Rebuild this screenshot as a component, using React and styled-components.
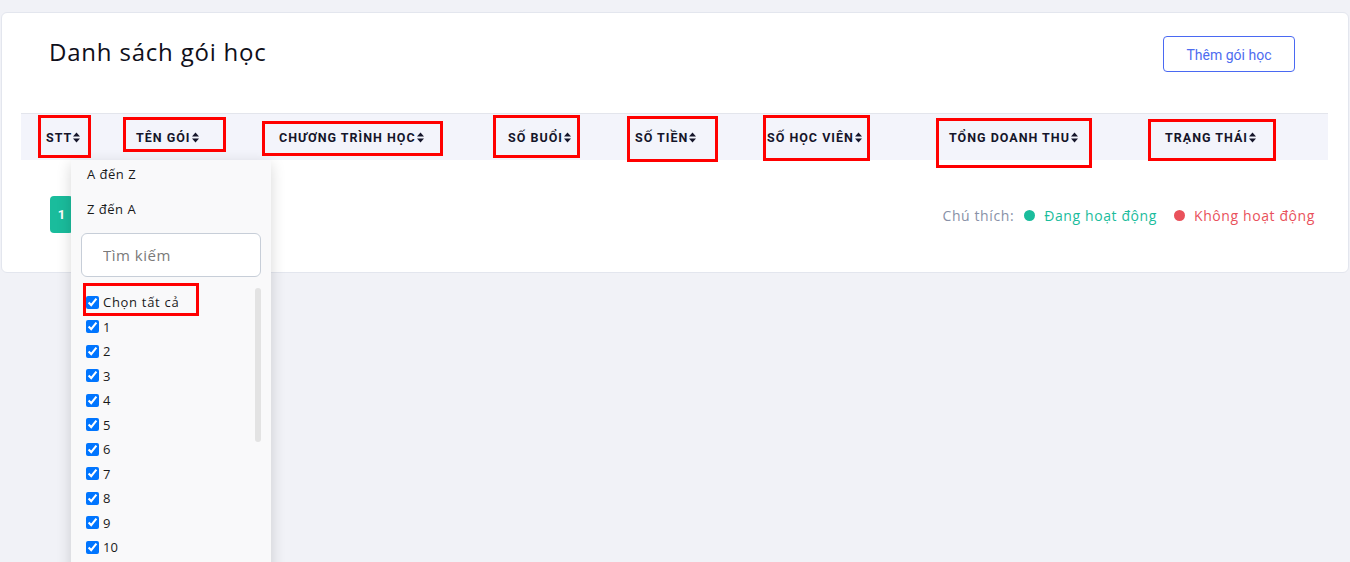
import styled, { createGlobalStyle } from "styled-components";

const GlobalStyle = createGlobalStyle`
  body {
    margin: 0;
    background: #f1f2f7;
    font-family: "Open Sans", "Noto Sans", sans-serif;
  }
`;

const Page = styled.div`
  min-height: 100vh;
  padding: 12px 1px 0 1px;
  box-sizing: border-box;
`;

const Card = styled.div`
  background: #fff;
  border: 1px solid #e3e6ee;
  border-radius: 6px;
  padding: 0 20px 0 19px;
  height: 259px;
`;

const TopBar = styled.div`
  display: flex;
  justify-content: space-between;
  align-items: flex-start;
  height: 100px;
  padding: 23px 33px 0 28px;
  box-sizing: border-box;
`;

const Title = styled.h1`
  margin: 0;
  margin-top: -1px;
  font-size: 24px;
  line-height: 34px;
  font-weight: 400;
  letter-spacing: 0.8px;
  color: #0f0f1a;
`;

const AddButton = styled.button`
  width: 132px;
  height: 36px;
  padding-top: 3px;
  border: 1px solid #4a69f2;
  border-radius: 4px;
  background: #fff;
  color: #4e6cf0;
  font-family: Roboto, sans-serif;
  font-size: 14px;
`;

const HeaderRow = styled.div`
  position: relative;
  display: grid;
  grid-template-columns: 90px 143px 229px 127px 132px 182px 216px 1fr;
  align-items: center;
  height: 46px;
  padding-left: 25px;
  background: #f3f4fb;
  border-top: 1px solid #e3e5ec;
`;

const HeadCell = styled.div`
  display: flex;
  align-items: center;
  gap: 1px;
  font-family: Roboto, sans-serif;
  font-weight: 700;
  font-size: 12.5px;
  letter-spacing: 1px;
  color: #15152a;
  text-transform: uppercase;
`;

const Mark = styled.div`
  position: absolute;
  border: 3px solid #f00;
  box-sizing: border-box;
  pointer-events: none;
  z-index: 3;
`;

const Dropdown = styled.div`
  position: absolute;
  left: 50px;
  top: 46px;
  width: 200px;
  background: #f9f9fa;
  box-shadow: 0 4px 14px rgba(0, 0, 0, 0.16);
  z-index: 2;
  font-family: "Open Sans", sans-serif;
`;

const SortItem = styled.div`
  height: 35px;
  box-sizing: border-box;
  padding: 0 0 8px 16px;
  display: flex;
  align-items: center;
  font-size: 13px;
  letter-spacing: 0.5px;
  color: #1a1a1a;
`;

const Search = styled.input`
  display: block;
  box-sizing: border-box;
  width: 180px;
  height: 44px;
  margin: 3px 10px 6px;
  padding-left: 21px;
  border: 1px solid #c7ced8;
  border-radius: 6px;
  background: #fff;
  font-family: "Open Sans", sans-serif;
  font-size: 15px;
  letter-spacing: 0.5px;
  &::placeholder {
    color: #7a7a7a;
  }
`;

const List = styled.div`
  position: relative;
  width: 180px;
  height: 300px;
  margin: 0 10px;
  padding: 7px 0;
  box-sizing: border-box;
  overflow: hidden;
`;

const ScrollThumb = styled.div`
  position: absolute;
  left: 184px;
  top: 128px;
  width: 6px;
  height: 154px;
  border-radius: 3px;
  background: #e3e3e3;
`;

const CheckRow = styled.label`
  display: flex;
  align-items: center;
  height: 24.5px;
  padding-left: 5px;
  font-size: 13px;
  letter-spacing: ${({ $wide }) => ($wide ? "0.7px" : "0")};
  color: #1a1a1a;
  input {
    width: 13px;
    height: 13px;
    margin: 0 4px 0 0;
  }
`;

const Footer = styled.div`
  display: flex;
  justify-content: space-between;
  align-items: center;
  padding: 36px 13px 0 29px;
`;

const PageButton = styled.div`
  width: 23px;
  height: 37px;
  display: flex;
  align-items: center;
  justify-content: center;
  background: #1abc9c;
  border-radius: 4px;
  color: #fff;
  font-family: Roboto, sans-serif;
  font-weight: 700;
  font-size: 13px;
`;

const Legend = styled.div`
  display: flex;
  align-items: center;
  font-size: 14px;
  letter-spacing: 0.6px;
  margin-top: 1px;
`;

const LegendLabel = styled.span`
  color: #8891a7;
  margin-right: 10px;
`;

const LegendItem = styled.span`
  display: flex;
  align-items: center;
  gap: 9px;
  color: ${({ $color }) => $color};
  margin-left: ${({ $first }) => ($first ? 0 : "17px")};
  &::before {
    content: "";
    width: 11px;
    height: 11px;
    border-radius: 50%;
    background: ${({ $color }) => $color};
  }
`;

const SortIcon = () => (
  <svg width="7" height="11" viewBox="0 0 7 11">
    <polygon points="0,4.6 3.5,0.6 7,4.6" fill="#15152a" />
    <polygon points="0,6.4 7,6.4 3.5,10.4" fill="#15152a" />
  </svg>
);

const columns = [
  "STT",
  "Tên gói",
  "Chương trình học",
  "Số buổi",
  "Số tiền",
  "Số học viên",
  "Tổng doanh thu",
  "Trạng thái",
];

// annotation boxes, relative to the header row
const marks = [
  { left: 17, top: 1, width: 53, height: 43 },
  { left: 102, top: 3, width: 103, height: 35 },
  { left: 241, top: 7, width: 181, height: 35 },
  { left: 472, top: 1, width: 87, height: 43 },
  { left: 606, top: 2, width: 91, height: 46 },
  { left: 742, top: 1, width: 107, height: 46 },
  { left: 915, top: 4, width: 156, height: 50 },
  { left: 1127, top: 5, width: 128, height: 42 },
];

const items = Array.from({ length: 10 }, (_, i) => i + 1);

export default function App() {
  return (
    <>
      <GlobalStyle />
      <Page>
        <Card>
          <TopBar>
            <Title>Danh sách gói học</Title>
            <AddButton>Thêm gói học</AddButton>
          </TopBar>
          <HeaderRow>
            {columns.map((c) => (
              <HeadCell key={c}>
                {c}
                <SortIcon />
              </HeadCell>
            ))}
            {marks.map((m, i) => (
              <Mark key={i} style={m} />
            ))}
            <Dropdown>
              <SortItem>A đến Z</SortItem>
              <SortItem>Z đến A</SortItem>
              <Search placeholder="Tìm kiếm" />
              <List>
                <Mark style={{ left: 2, top: 0, width: 116, height: 33 }} />
                <CheckRow $wide>
                  <input type="checkbox" checked readOnly />
                  Chọn tất cả
                </CheckRow>
                {items.map((n) => (
                  <CheckRow key={n}>
                    <input type="checkbox" checked readOnly />
                    {n}
                  </CheckRow>
                ))}
              </List>
              <ScrollThumb />
            </Dropdown>
          </HeaderRow>
          <Footer>
            <PageButton>1</PageButton>
            <Legend>
              <LegendLabel>Chú thích:</LegendLabel>
              <LegendItem $first $color="#1abc9c">
                Đang hoạt động
              </LegendItem>
              <LegendItem $color="#e9515b">Không hoạt động</LegendItem>
            </Legend>
          </Footer>
        </Card>
      </Page>
    </>
  );
}
